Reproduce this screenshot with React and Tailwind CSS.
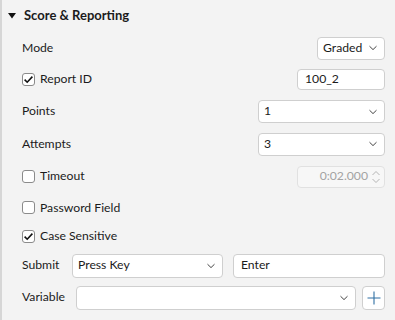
import React from "react";

const Chevron = () => (
  <svg width="10" height="6" viewBox="0 0 10 6" className="shrink-0">
    <path d="M1.5 1.2 L5 4.6 L8.5 1.2" fill="none" stroke="#444" strokeWidth="1" />
  </svg>
);

const Check = ({ checked }) => (
  <span className="w-[13px] h-[13px] rounded-[3px] border border-[#8b8b8b] bg-white flex items-center justify-center shrink-0">
    {checked && (
      <svg width="11" height="11" viewBox="0 0 11 11">
        <path d="M1.6 5.6 L4.2 8.2 L9.4 2.6" fill="none" stroke="#111" strokeWidth="1.6" />
      </svg>
    )}
  </span>
);

const Select = ({ value, className }) => (
  <div className={`h-[23px] bg-white border border-[#cfcfcf] rounded-[4px] flex items-center justify-between pl-[5px] pr-[6px] ${className}`}>
    <span>{value}</span>
    <Chevron />
  </div>
);

const Field = ({ value, className }) => (
  <div className={`h-[21px] bg-white border border-[#cfcfcf] rounded-[4px] flex items-center px-[7px] ${className}`}>
    <span>{value}</span>
  </div>
);

const CheckLabel = ({ checked, label }) => (
  <label className="flex items-center gap-[5px]">
    <Check checked={checked} />
    <span>{label}</span>
  </label>
);

export default function App() {
  return (
    <div
      className="w-[395px] h-[320px] bg-[#f3f3f3] border-l-2 border-[#d6d6d6] text-[12.2px] text-[#1b1b1b] overflow-hidden"
      style={{ fontFamily: 'Lato, "Noto Sans", sans-serif' }}
    >
      <div className="h-[32px] flex items-center pl-[6px] gap-[8px]">
        <svg width="8" height="6" viewBox="0 0 8 6">
          <path d="M0 0 L8 0 L4 5.5 Z" fill="#111" />
        </svg>
        <span className="font-bold text-[13px]">Score &amp; Reporting</span>
      </div>

      <div className="pl-[20px] pr-[10px]">
        <div className="h-[32px] flex items-center justify-between">
          <span>Mode</span>
          <Select value="Graded" className="w-[68px]" />
        </div>
        <div className="h-[31px] flex items-center justify-between">
          <CheckLabel checked label="Report ID" />
          <Field value="100_2" className="w-[88px]" />
        </div>
        <div className="h-[33px] flex items-center justify-between">
          <span>Points</span>
          <Select value="1" className="w-[127px]" />
        </div>
        <div className="h-[32px] flex items-center justify-between">
          <span>Attempts</span>
          <Select value="3" className="w-[127px]" />
        </div>
        <div className="h-[33px] flex items-center justify-between">
          <CheckLabel label="Timeout" />
          <div className="w-[88px] h-[22px] border border-[#e1e1e1] rounded-[4px] bg-[#f7f7f7] flex items-center justify-end pr-[3px] gap-[3px] text-[#a3a3a3]">
            <span>0:02.000</span>
            <svg width="10" height="16" viewBox="0 0 10 16">
              <path d="M1.5 6 L5 2.5 L8.5 6" fill="none" stroke="#b5b5b5" strokeWidth="1" />
              <path d="M1.5 10 L5 13.5 L8.5 10" fill="none" stroke="#b5b5b5" strokeWidth="1" />
            </svg>
          </div>
        </div>
        <div className="h-[30px] flex items-center">
          <CheckLabel label="Password Field" />
        </div>
        <div className="h-[27px] flex items-center">
          <CheckLabel checked label="Case Sensitive" />
        </div>
        <div className="h-[31px] flex items-center">
          <span className="w-[50px]">Submit</span>
          <Select value="Press Key" className="w-[151px] h-[24px]" />
          <Field value="Enter" className="flex-1 ml-[10px] h-[24px]" />
        </div>
        <div className="h-[33px] flex items-center">
          <span className="w-[54px]">Variable</span>
          <Select value="" className="flex-1 h-[24px]" />
          <button className="ml-[6px] w-[23px] h-[24px] border border-[#cfcfcf] rounded-[4px] bg-white flex items-center justify-center">
            <svg width="16" height="16" viewBox="0 0 16 16">
              <path d="M8 1.5 V14.5 M1.5 8 H14.5" stroke="#2f6fa3" strokeWidth="1.1" />
            </svg>
          </button>
        </div>
      </div>
    </div>
  );
}
